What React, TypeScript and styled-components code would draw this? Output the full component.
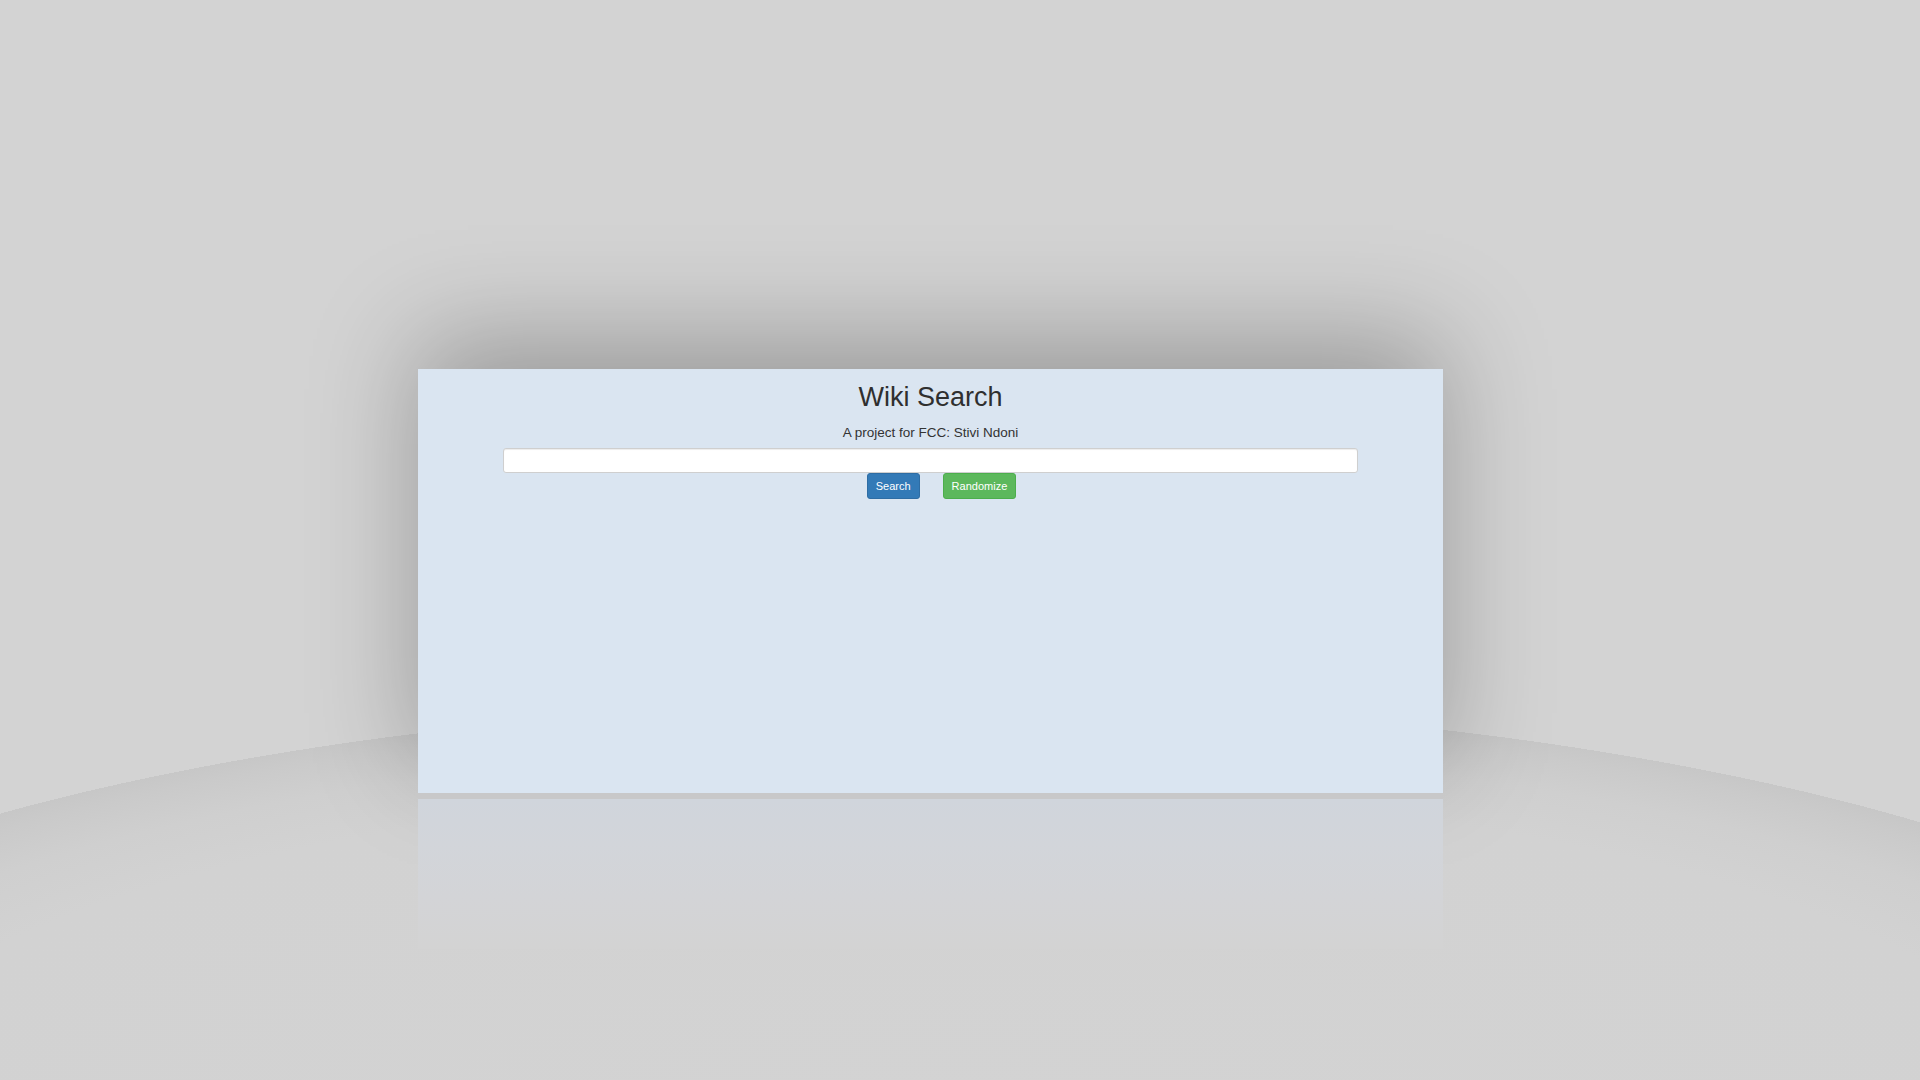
import React from "react";
import styled, { createGlobalStyle } from "styled-components";

const GlobalStyle = createGlobalStyle`
  html, body {
    margin: 0;
    padding: 0;
  }
  body {
    width: 1920px;
    height: 1080px;
    overflow: hidden;
    font-family: "Liberation Sans", Arial, sans-serif;
    background:
      radial-gradient(1400px 426px at 945px 1128px,
        #d3d3d3 0%,
        #d2d2d2 80%,
        #cfcfcf 90%,
        #cacaca 97%,
        #c7c7c7 100%,
        rgba(211, 211, 211, 0) 100%),
      #d3d3d3;
  }
`;

const Page = styled.main`
  width: 1920px;
  height: 1080px;
  box-sizing: border-box;
  padding: 369px 0 0 418px;
`;

const Stage = styled.section`
  width: 1025px;
  display: flex;
  flex-direction: column;
`;

const Panel = styled.div`
  height: 424px;
  box-sizing: border-box;
  padding-top: 13px;
  background: #dae5f1;
  box-shadow: 0 -30px 100px rgba(0, 0, 0, 0.27);
  display: flex;
  flex-direction: column;
  align-items: center;
`;

const Ledge = styled.div`
  height: 6px;
  background: #c8c8c9;
`;

const Reflection = styled.div`
  height: 150px;
  background: linear-gradient(
    to bottom,
    #d0d5dc 0%,
    #d2d5da 30%,
    #d3d4d7 65%,
    #d3d3d3 100%
  );
`;

const Title = styled.h1`
  margin: 0;
  font-size: 27px;
  line-height: 30px;
  font-weight: 400;
  color: #2f2f2f;
`;

const Subtitle = styled.p`
  margin: 13px 0 0;
  font-size: 13.5px;
  line-height: 16px;
  color: #333;
`;

const SearchInput = styled.input`
  margin-top: 7px;
  width: 855px;
  height: 25px;
  box-sizing: border-box;
  border: 1px solid #cfcfcf;
  border-radius: 3px;
  background: #fff;
  box-shadow: inset 0 1px 1px rgba(0, 0, 0, 0.075);
  padding: 0 8px;
  font-family: inherit;
  font-size: 12px;
  outline: none;
`;

const ButtonRow = styled.div`
  display: flex;
  gap: 23px;
  padding-left: 22px;
`;

const ActionButton = styled.button<{ $variant: "primary" | "success" }>`
  height: 26px;
  box-sizing: border-box;
  padding: 0 8px;
  border-radius: 3px;
  border: 1px solid ${(p) => (p.$variant === "primary" ? "#2e6da4" : "#4cae4c")};
  background: ${(p) => (p.$variant === "primary" ? "#337ab7" : "#5cb85c")};
  color: #fff;
  font-family: "Liberation Sans", Arial, sans-serif;
  font-size: 11px;
  line-height: 1;
  cursor: pointer;
`;

export default function App() {
  return (
    <>
      <GlobalStyle />
      <Page>
        <Stage>
          <Panel>
            <Title>Wiki Search</Title>
            <Subtitle>A project for FCC: Stivi Ndoni</Subtitle>
            <SearchInput type="text" aria-label="Search" />
            <ButtonRow>
              <ActionButton $variant="primary">Search</ActionButton>
              <ActionButton $variant="success">Randomize</ActionButton>
            </ButtonRow>
          </Panel>
          <Ledge />
          <Reflection />
        </Stage>
      </Page>
    </>
  );
}
